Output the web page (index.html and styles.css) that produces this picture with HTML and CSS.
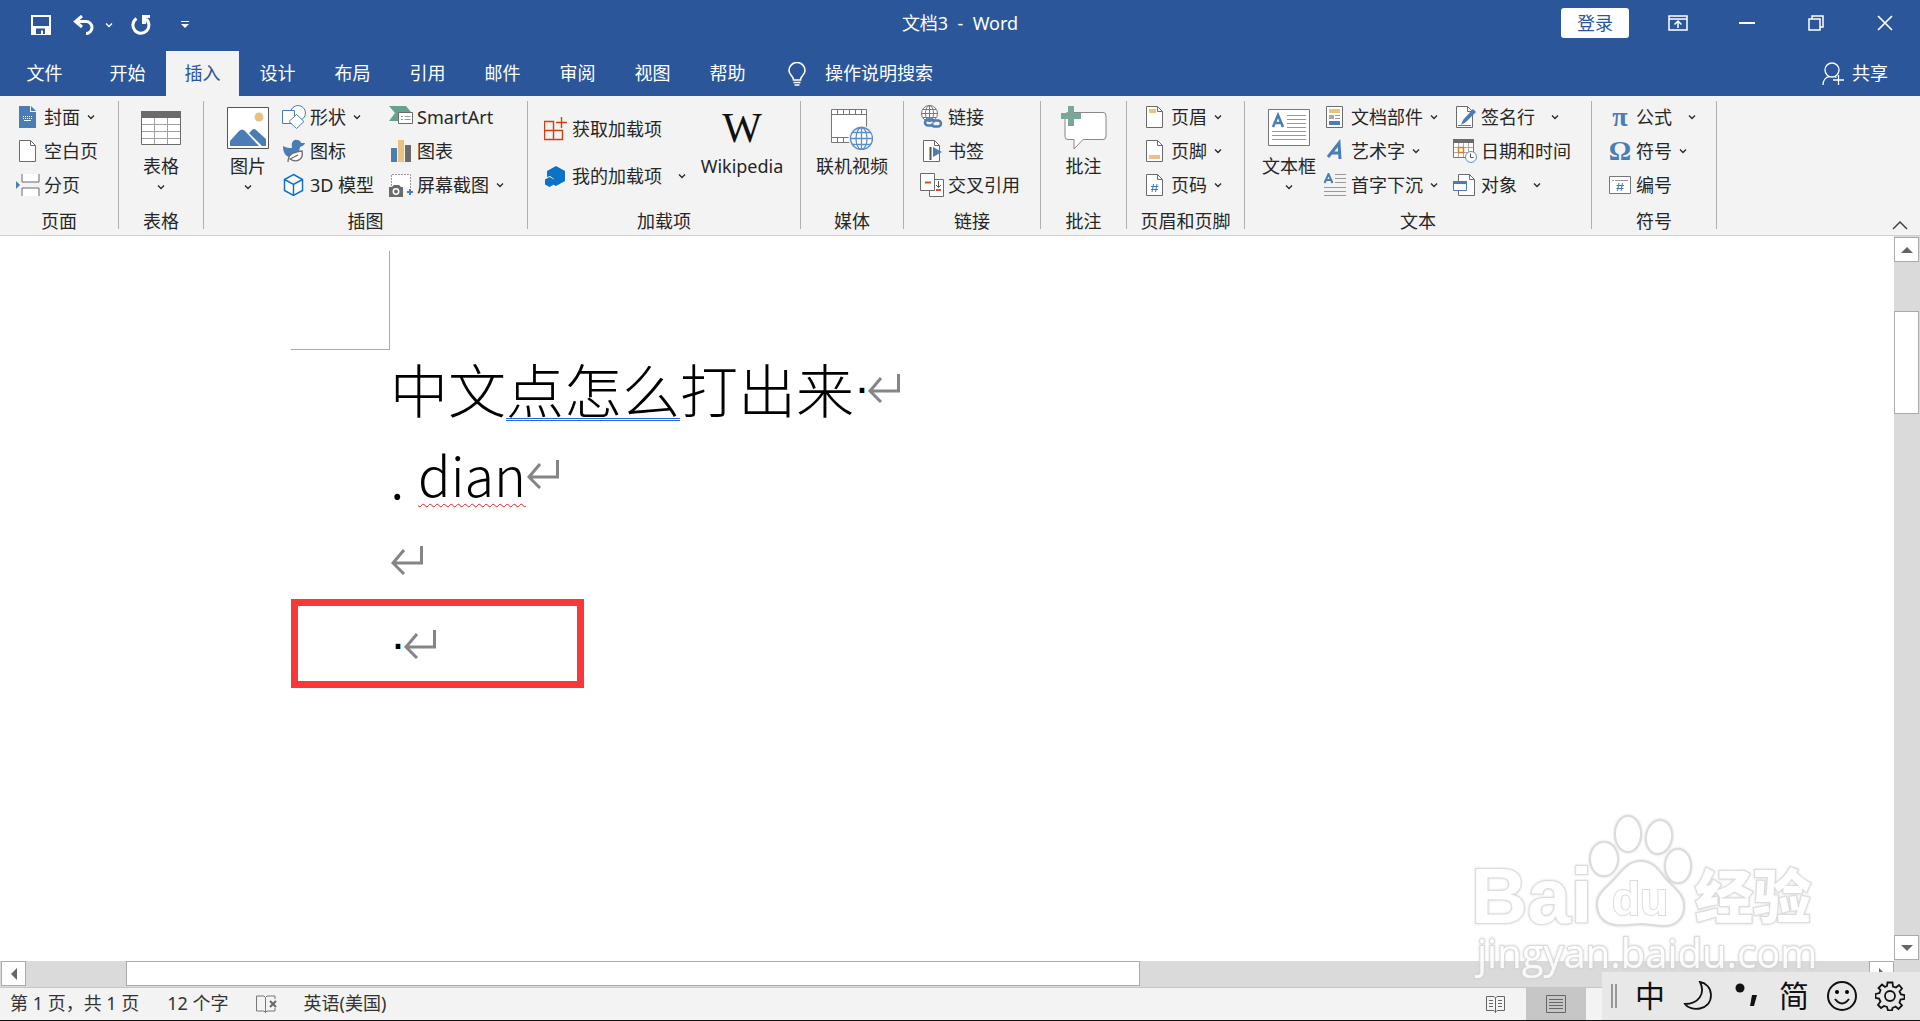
FILE: index.html
```html
<!DOCTYPE html>
<html lang="zh-CN">
<head>
  <meta charset="UTF-8" />
  <meta name="viewport" content="width=device-width, initial-scale=1.0" />
  <title>文档3 - Word</title>
  <link rel="stylesheet" href="styles.css">
</head>
<body>
  <svg class="defs" aria-hidden="true">
    <symbol id="chev" viewBox="0 0 8 6"><path d="M1 1.5l3 3 3-3" fill="none" stroke="currentColor" stroke-width="1.3"/></symbol>
    <symbol id="page" viewBox="0 0 24 24"><path d="M3.500 1.500h11l5 5v16h-16z" fill="#fff" stroke="#6b6b6b"/><path d="M14.500 1.500v5h5" fill="none" stroke="#6b6b6b"/></symbol>
    <symbol id="enter" viewBox="0 0 34 30"><path d="M31.500 1v17H3M14 5L3 18l11 11" fill="none" stroke="#858585" stroke-width="3"/></symbol>
  </svg>

  <!-- 标题栏 -->
  <header class="titlebar">
    <div class="quick">
      <button type="button" class="q-save" aria-label="保存"><svg width="20" height="20"><path d="M1 1h18v18H1z" fill="none" stroke="#fff" stroke-width="2"/><path d="M2 11h16v7H2z" fill="#fff"/><path d="M5 13.500h9V19H12v-3.500h-2V19H5z" fill="#2b579a"/></svg></button>
      <button type="button" class="q-undo" aria-label="撤消"><svg width="22" height="20"><path d="M9 1L2.500 6.500 9 12M3 6.500h10a6 6 0 0 1 0 12" fill="none" stroke="#fff" stroke-width="3"/></svg></button>
      <button type="button" class="q-chev" aria-label="撤消列表"><svg width="8" height="6"><use href="#chev"/></svg></button>
      <button type="button" class="q-redo" aria-label="重复"><svg width="20" height="20"><path d="M5.500 3.500A8 8 0 1 0 15 4" fill="none" stroke="#fff" stroke-width="3"/><path d="M11 0h8v3h-4v6h-4z" fill="#fff"/></svg></button>
      <button type="button" class="q-more" aria-label="自定义"><svg width="8" height="8"><path d="M0 .5h8" stroke="#fff"/><path d="M0 3h8L4 7z" fill="#fff"/></svg></button>
    </div>
    <h1>文档3&nbsp; -&nbsp; Word</h1>
    <div class="window-btns">
      <button type="button" class="login">登录</button>
      <button type="button" class="win" aria-label="功能区显示选项"><svg width="20" height="16"><path d="M1 1h18v14H1zM1 4h18M10 13V6M6.500 9.500L10 6l3.500 3.500" fill="none" stroke="#fff" stroke-width="1.500"/></svg></button>
      <button type="button" class="win" aria-label="最小化"><svg width="16" height="16"><path d="M0 8h16" stroke="#fff" stroke-width="2"/></svg></button>
      <button type="button" class="win" aria-label="还原"><svg width="16" height="16"><path d="M1 4h11v11H1zM4 4V1h11v11h-3" fill="none" stroke="#fff" stroke-width="1.500"/></svg></button>
      <button type="button" class="win" aria-label="关闭"><svg width="16" height="16"><path d="M1 1l14 14M15 1L1 15" stroke="#fff" stroke-width="1.700"/></svg></button>
    </div>
  </header>

  <!-- 选项卡 -->
  <nav class="tabs">
    <button type="button" class="file">文件</button>
    <button type="button">开始</button>
    <button type="button" class="active">插入</button>
    <button type="button">设计</button>
    <button type="button">布局</button>
    <button type="button">引用</button>
    <button type="button">邮件</button>
    <button type="button">审阅</button>
    <button type="button">视图</button>
    <button type="button">帮助</button>
    <button type="button" class="tell"><svg width="18" height="24"><path d="M5.500 18c0-4-4.500-5-4.500-9.500a8 8 0 0 1 16 0c0 4.500-4.500 5.500-4.500 9.500zM5.500 20.500h7M6.500 23h5" fill="none" stroke="#fff" stroke-width="1.600"/></svg>操作说明搜索</button>
    <button type="button" class="share"><svg width="22" height="24"><circle cx="10" cy="8" r="7" fill="none" stroke="#fff" stroke-width="1.300"/><path d="M1 23c0-5 3-8 6.500-8.500M12.500 14.500l2 1M16.500 13v10M11 18h11" fill="none" stroke="#fff" stroke-width="1.300"/></svg>共享</button>
  </nav>

  <!-- 功能区 -->
  <div class="ribbon">
    <section class="group g-page">
      <div class="body">
        <div class="col">
          <button type="button"><svg class="ic"><path d="M3 1h11v6h6v16H3z" fill="#4a7db5"/><path d="M15 1l5 5h-5z" fill="#4a7db5"/><path d="M7 11.500h9M7 13.500h9" stroke="#fff" stroke-dasharray="1 1"/><path d="M8 15.500h7" stroke="#fff"/></svg>封面<svg class="chev"><use href="#chev"/></svg></button>
          <button type="button"><svg class="ic"><use href="#page"/></svg>空白页</button>
          <button type="button"><svg class="ic"><path d="M6 1v8h17V1M6 23v-8h17v8" fill="#fff" stroke="#6b6b6b"/><path d="M0 8l4 4-4 4z" fill="#4a7db5"/></svg>分页</button>
        </div>
      </div>
      <h2>页面</h2>
    </section>

    <section class="group g-table">
      <div class="body">
        <button type="button" class="big"><svg width="42" height="44"><path d="M1.500 5.500h39v33h-39z" fill="#fff" stroke="#6b6b6b"/><path d="M1 5h40v7H1z" fill="#6b6b6b"/><path d="M2 18.500h38M2 25.500h38M2 32.500h38M14.500 12v26M27.500 12v26" stroke="#a0a0a0"/></svg>表格<svg class="chev"><use href="#chev"/></svg></button>
      </div>
      <h2>表格</h2>
    </section>

    <section class="group g-pics">
      <div class="body">
        <button type="button" class="big"><svg width="42" height="44"><path d="M.5 1.500h41v41H.5z" fill="#fff" stroke="#555"/><circle cx="32" cy="11" r="4.500" fill="#e9c282"/><path d="M3 40v-5l9-10q3-3 6 0l14 15z" fill="#4a7db5"/><path d="M22 27l3-3q2-2 4 0l10 9v7h-4z" fill="#4a7db5"/></svg>图片<svg class="chev"><use href="#chev"/></svg></button>
        <div class="col illus">
          <button type="button"><svg class="ic"><circle cx="16" cy="8" r="7.500" fill="#fff" stroke="#4a7db5"/><path d="M.5 5.500h12v13H.5z" fill="#fff" stroke="#4a7db5"/><path d="M14.500 9.500l7.500 7-7.500 7-7.500-7z" fill="#fff" stroke="#4a7db5"/></svg>形状<svg class="chev"><use href="#chev"/></svg></button>
          <button type="button"><svg class="ic"><path d="M1 7c4 2 6 2 9 2-1-5 1-9 5-8 3 0 4 2 4 3h4c-1 3-3 3-5 4-1 6-4 10-10 10C4 18 1 14 1 7z" fill="#4a7db5"/><path d="M6 23c0-7 4-10 14-11 2 9-6 12-12 8l8-4" fill="#fff" stroke="#6b6b6b" stroke-width="1.300"/></svg>图标</button>
          <button type="button"><svg class="ic"><path d="M11.500 1.500l9 5v11l-9 5-9-5v-11zM2.500 6.500l9 5 9-5M11.500 11.500v11" fill="#fff" stroke="#0f72c6" stroke-width="1.500"/></svg>3D 模型</button>
        </div>
        <div class="col">
          <button type="button"><svg class="ic"><path d="M0 1h17l5 6h-9v9H0l6-8z" fill="#62a48e"/><path d="M9.500 7.500h14v11h-14z" fill="#fff" stroke="#6b6b6b"/><path d="M12 11.500h2M12 14.500h2M15.500 11.500h6M15.500 14.500h6" stroke="#999"/></svg>SmartArt</button>
          <button type="button"><svg class="ic"><path d="M2 9h6v14H2z" fill="#4a7db5"/><path d="M9 1h6v22H9z" fill="#e9c282"/><path d="M16 6h6v17h-6z" fill="#6b6b6b"/></svg>图表</button>
          <button type="button"><svg class="ic"><path d="M2.500 13V1.500h19V16" fill="#fff" stroke="#999" stroke-dasharray="2 1"/><path d="M0 14h3l2-2h5l2 2h2v10H0z" fill="#6b6b6b"/><circle cx="7" cy="18.500" r="2.700" fill="none" stroke="#fff" stroke-width="1.500"/><path d="M21 16v6M18 19h6" stroke="#4a7db5" stroke-width="2"/></svg>屏幕截图<svg class="chev"><use href="#chev"/></svg></button>
        </div>
      </div>
      <h2>插图</h2>
    </section>

    <section class="group g-addin">
      <div class="body">
        <div class="col spaced">
          <button type="button"><svg class="ic"><path d="M.5 4.500h9v18h-9zM.5 13.500h18v9H.5zM9.500 4.500V13M17.500 0v11M12 5.500h11" fill="none" stroke="#d0400e" stroke-width="1.400"/></svg>获取加载项</button>
          <button type="button"><svg class="ic"><path d="M12 2l9 5v10l-9 5-2-1v-6l-4-3-3 1V7z" fill="#0b72c8"/><path d="M5.500 13l4.500 2.500v5L5.500 23 1 20.500v-5z" fill="#0b72c8"/></svg>我的加载项<svg class="chev far"><use href="#chev"/></svg></button>
        </div>
        <button type="button" class="big wiki"><span class="w">W</span>Wikipedia</button>
      </div>
      <h2>加载项</h2>
    </section>

    <section class="group g-media">
      <div class="body">
        <button type="button" class="big"><svg width="42" height="44"><path d="M.5 3.500h35v33H.5z" fill="#fff" stroke="#777"/><path d="M.5 8.500h35M.5 31.500h35M6.500 4v4.500M12.500 4v4.500M18.500 4v4.500M24.500 4v4.500M30.500 4v4.500M6.500 32v4.500M12.500 32v4.500M18.500 32v4.500" stroke="#777" fill="none"/><circle cx="30.500" cy="32.500" r="13" fill="#f3f3f3"/><circle cx="30.500" cy="32.500" r="11" fill="#fff" stroke="#5c8fca" stroke-width="1.300"/><ellipse cx="30.500" cy="32.500" rx="5.500" ry="11" fill="none" stroke="#5c8fca" stroke-width="1.300"/><path d="M30.500 21.500v22M19.500 32.500h22M21.500 26.500h18M21.500 38.500h18" stroke="#5c8fca" stroke-width="1.300"/></svg>联机视频</button>
      </div>
      <h2>媒体</h2>
    </section>

    <section class="group g-link">
      <div class="body">
        <div class="col">
          <button type="button"><svg class="ic"><circle cx="9.500" cy="8.500" r="8" fill="#fff" stroke="#777"/><ellipse cx="9.500" cy="8.500" rx="4" ry="8" fill="none" stroke="#777"/><path d="M9.500 0v17M1 8.500h17M3 4.500h13M3 12.500h13" stroke="#777"/><path d="M13 20.500H8a3 3 0 0 1 0-6h4q3 1 1 3M13 15.500h5a3 3 0 0 1 0 6h-4q-3-1-1-3" fill="none" stroke="#4a7db5" stroke-width="2.500"/></svg>链接</button>
          <button type="button"><svg class="ic"><use href="#page"/><path d="M10.500 8v13" stroke="#555" stroke-width="2"/><path d="M13 8l9 5-9 5z" fill="#4a7db5"/></svg>书签</button>
          <button type="button"><svg class="ic"><path d="M9.500 6.500h14v17h-14z" fill="#fff" stroke="#6b6b6b"/><path d="M.5.5h14v17H.5z" fill="#fff" stroke="#6b6b6b"/><path d="M5 9.500h6M16 17h5" stroke="#d8502c" stroke-width="2"/><path d="M18.500 8v6M16 12l2.500 2.500L21 12" fill="none" stroke="#555"/></svg>交叉引用</button>
        </div>
      </div>
      <h2>链接</h2>
    </section>

    <section class="group g-note">
      <div class="body">
        <button type="button" class="big"><svg width="46" height="44"><path d="M7 6.500h35q3 0 3 3v21q0 3-3 3H22L13 43v-9.500H7q-3 0-3-3v-21q0-3 3-3z" fill="#fff" stroke="#888"/><path d="M7 0h6v7h7v6h-7v7H7v-7H0V7h7z" fill="#79a898"/></svg>批注</button>
      </div>
      <h2>批注</h2>
    </section>

    <section class="group g-head">
      <div class="body">
        <div class="col">
          <button type="button"><svg class="ic"><use href="#page"/><path d="M6 4h7v4H6z" fill="#e9c282"/></svg>页眉<svg class="chev"><use href="#chev"/></svg></button>
          <button type="button"><svg class="ic"><use href="#page"/><path d="M6 16h11v4H6z" fill="#e9c282"/></svg>页脚<svg class="chev"><use href="#chev"/></svg></button>
          <button type="button"><svg class="ic"><use href="#page"/><path d="M10.500 11l-1.500 8M14 11l-1.500 8M8 13.500h7.500M8 16.500h7" stroke="#3e79bb" fill="none"/></svg>页码<svg class="chev"><use href="#chev"/></svg></button>
        </div>
      </div>
      <h2>页眉和页脚</h2>
    </section>

    <section class="group g-text">
      <div class="body">
        <button type="button" class="big"><svg width="42" height="44"><path d="M.5 3.500h41v36H.5z" fill="#fff" stroke="#777"/><path d="M5 21l5-12 5 12M7 17h6" fill="none" stroke="#4a7db5" stroke-width="2.500"/><path d="M19 9.500h19M19 13.500h19M19 17.500h19M19 21.500h19M4 25.500h34M4 29.500h34M4 33.500h34" stroke="#999"/></svg>文本框<svg class="chev"><use href="#chev"/></svg></button>
        <div class="col parts">
          <button type="button"><svg class="ic"><path d="M3.500 1.500h16v21h-16z" fill="#fff" stroke="#6b6b6b"/><path d="M6 4h11v4H6z" fill="#e9c282"/><path d="M6 10h5v4H6z" fill="#aaa"/><path d="M12 10.500h5M12 13.500h5" stroke="#999"/><path d="M6 16h11v4H6z" fill="#4a7db5"/></svg>文档部件<svg class="chev"><use href="#chev"/></svg></button>
          <button type="button"><svg class="ic"><path d="M5 18L16 4l1 16M8 14h8" fill="none" stroke="#4a7db5" stroke-width="3"/></svg>艺术字<svg class="chev"><use href="#chev"/></svg></button>
          <button type="button"><svg class="ic"><path d="M1.500 10l4-9 4 9M3 7h5" fill="none" stroke="#4a7db5" stroke-width="2"/><path d="M12 1.500h11M12 5.500h11M12 9.500h11M1 14.500h22M1 18.500h22M1 22.500h22" stroke="#999"/></svg>首字下沉<svg class="chev"><use href="#chev"/></svg></button>
        </div>
        <div class="col">
          <button type="button"><svg class="ic"><use href="#page"/><path d="M5 20.500h13" stroke="#4a7db5"/><path d="M8 20l2-5L20 4l3 3-10 10z" fill="#4a7db5"/></svg>签名行<svg class="chev far"><use href="#chev"/></svg></button>
          <button type="button"><svg class="ic"><path d="M.5.5h20v18H.5z" fill="#fff" stroke="#777"/><path d="M0 0h21v4H0z" fill="#6b6b6b"/><path d="M1 8.500h19M1 13.500h19M5.500 4v14M10.500 4v14M15.500 4v14" stroke="#aaa"/><path d="M5.500 8.500h5v5h-5z" fill="#fff" stroke="#e07a20" stroke-width="1.500"/><circle cx="18" cy="18" r="5.500" fill="#fff" stroke="#5c8fca"/><path d="M17.500 14.500v4h3" fill="none" stroke="#555"/></svg>日期和时间</button>
          <button type="button"><svg class="ic"><path d="M5.500 1.500h11l5 5v16h-16z" fill="#fff" stroke="#6b6b6b"/><path d="M16.500 1.500v5h5" fill="none" stroke="#6b6b6b"/><path d="M.5 8.500h13v9H.5z" fill="#fff" stroke="#4a7db5"/><path d="M0 8h14v3H0z" fill="#4a7db5"/></svg>对象<svg class="chev far"><use href="#chev"/></svg></button>
        </div>
      </div>
      <h2>文本</h2>
    </section>

    <section class="group g-symbol">
      <div class="body">
        <div class="col">
          <button type="button"><span class="ic greek">π</span>公式<svg class="chev far"><use href="#chev"/></svg></button>
          <button type="button"><span class="ic greek">Ω</span>符号<svg class="chev"><use href="#chev"/></svg></button>
          <button type="button"><svg class="ic"><path d="M1.500 3.500h21v17h-21z" fill="#fff" stroke="#777"/><path d="M4 7.500h2M7 7.500h13" stroke="#999"/><path d="M11 10l-1.500 8M14.500 10L13 18M8.500 12.500H16M8.500 15.500h7" stroke="#3e79bb" fill="none"/></svg>编号</button>
        </div>
      </div>
      <h2>符号</h2>
    </section>

    <button type="button" class="collapse" aria-label="折叠功能区"><svg width="16" height="9"><path d="M1 8l7-7 7 7" fill="none" stroke="#444" stroke-width="1.500"/></svg></button>
  </div>

  <!-- 文档区 -->
  <div class="workspace">
    <main class="doc">
      <div class="corner"></div>
      <p>中文<span class="grammar">点怎么</span>打出来<span class="dot">·</span><svg class="enter"><use href="#enter"/></svg></p>
      <p><span class="stop">.</span><span class="spell">dian</span><svg class="enter"><use href="#enter"/></svg></p>
      <p><svg class="enter"><use href="#enter"/></svg></p>
      <p class="marked"><span class="dot">·</span><svg class="enter"><use href="#enter"/></svg></p>
    </main>
    <div class="vscroll">
      <button type="button" aria-label="向上"><svg width="12" height="6"><path d="M0 6l6-6 6 6z" fill="#666"/></svg></button>
      <div class="thumb"></div>
      <button type="button" class="last" aria-label="向下"><svg width="12" height="6"><path d="M0 0h12L6 6z" fill="#666"/></svg></button>
    </div>
  </div>
  <div class="hscroll">
    <button type="button" aria-label="向左"><svg width="6" height="12"><path d="M6 0v12L0 6z" fill="#666"/></svg></button>
    <div class="track"><div class="thumb"></div></div>
    <button type="button" aria-label="向右"><svg width="6" height="12"><path d="M0 0v12l6-6z" fill="#666"/></svg></button>
  </div>

  <!-- 状态栏 -->
  <footer class="status">
    <span class="pages">第 1 页，共 1 页</span>
    <span class="words">12 个字</span>
    <svg class="proof" width="22" height="18"><path d="M9.500 2.500L8 1H.5v15H8l1.500 1.500L11 16h8v-3M9.500 2.500v15M9.500 2.500L11 1h8v3" fill="none" stroke="#777"/><path d="M14 6l6 6M20 6l-6 6" stroke="#666" stroke-width="2"/></svg>
    <span>英语(美国)</span>
    <button type="button" class="view read" aria-label="阅读视图"><svg width="20" height="18"><path d="M9.500 3L8 1.500H.5v14H8l1.500 1.500 1.500-1.500h7.500v-14H11L9.500 3v15M3 5.500h4M3 8.500h4M3 11.500h4M12 5.500h4M12 8.500h4M12 11.500h4" fill="none" stroke="#666"/></svg></button>
    <button type="button" class="view on" aria-label="页面视图"><svg width="20" height="18"><path d="M.5.5h19v17H.5zM3 4.500h14M3 7.500h14M3 10.500h14M3 13.500h14" fill="none" stroke="#666"/></svg></button>
  </footer>

  <!-- 水印 -->
  <svg class="watermark" width="350" height="175">
    <g fill="#fff" stroke="#d6d6d6" stroke-width="2">
      <ellipse cx="157" cy="22" rx="13" ry="18"/>
      <ellipse cx="188" cy="25" rx="13" ry="17" transform="rotate(10 188 25)"/>
      <ellipse cx="133" cy="47" rx="14" ry="17"/>
      <ellipse cx="207" cy="54" rx="13" ry="17"/>
      <path d="M170 49c12 0 18 9 24 17 9 10 19 16 19 28 0 14-10 20-20 20-9 0-14-2-23-2s-16 2-25 1c-11-1-19-8-19-21 0-12 11-17 20-28 7-8 13-15 24-15z"/>
      <text class="wm-bai" x="0" y="111">Bai</text>
      <text class="wm-du" x="141" y="103">du</text>
      <text class="wm-cn" x="224" y="106">经验</text>
      <text class="wm-url" x="6" y="156">jingyan.baidu.com</text>
    </g>
  </svg>

  <!-- 输入法工具条 -->
  <div class="ime">
    <i class="grip"></i>
    <button type="button">中</button>
    <button type="button" aria-label="全半角"><svg width="30" height="30"><path d="M17 1c6 12-2 22-15 22 5 8 26 7 26-9 0-7-5-12-11-13z" fill="none" stroke="#111" stroke-width="1.800"/></svg></button>
    <button type="button" aria-label="标点"><svg width="24" height="26"><circle cx="6" cy="5" r="4.500" fill="#111"/><path d="M18 12h5l-3 11h-4z" fill="#111"/></svg></button>
    <button type="button">简</button>
    <button type="button" aria-label="表情"><svg width="30" height="30"><circle cx="15" cy="15" r="14" fill="none" stroke="#111" stroke-width="2"/><circle cx="10" cy="11" r="2"/><circle cx="20" cy="11" r="2"/><path d="M8 18q7 9 14 0" fill="none" stroke="#111" stroke-width="2"/></svg></button>
    <button type="button" aria-label="设置"><svg width="30" height="30"><path d="M12.500 1.500h5l.5 4 3 1 3-2.500 3 3.500-2.500 3 1.500 3 3.500.5v4l-4 .5-1 3 2.500 3-3.500 3.500-3-2.500-3 1.500-.5 2.500h-4l-1-3.500-3-1-3 2-3-3 2.500-3.500-1.500-3-3.500-.5v-4l4-1 1-3L3.500 7 7 3.500 10 6l2-1z" fill="none" stroke="#111" stroke-width="1.800"/><circle cx="15" cy="15" r="5" fill="none" stroke="#111" stroke-width="1.800"/></svg></button>
  </div>
</body>
</html>
```
FILE: styles.css
```css
* { box-sizing: border-box; }
body {
  margin: 0;
  height: 100vh;
  display: flex; flex-direction: column;
  overflow: hidden;
  position: relative;
  background: #fff;
  color: #262626;
  font-family: "Noto Sans", "Noto Sans CJK SC", sans-serif;
  font-size: 18px;
}
button {
  font: inherit; color: inherit;
  padding: 0; border: none; background: none;
  white-space: nowrap;
}
svg { display: block; flex: none; }
h1, h2, p { margin: 0; font-weight: normal; }
.defs { position: absolute; width: 0; height: 0; }

/* 标题栏 */
.titlebar {
  display: grid; grid-template-columns: 1fr auto 1fr;
  align-items: center;
  flex: none; height: 51px;
  background: #2b579a; color: #fff;
}
.titlebar h1 { font-size: 18px; line-height: 46px; height: 51px; }
.quick { display: flex; align-items: center; padding-left: 31px; height: 49px; align-self: start; }
.q-undo { margin-left: 22px; }
.q-chev { margin-left: 10px; }
.q-redo { margin-left: 18px; }
.q-more { margin-left: 30px; }
.window-btns { display: flex; align-items: center; justify-content: flex-end; height: 46px; padding-right: 1px; align-self: start; }
.login {
  width: 68px; height: 30px; line-height: 30px;
  margin-right: 14px;
  background: #fff; color: #2b579a;
  border-radius: 3px;
}
.win { width: 69px; height: 46px; display: flex; align-items: center; justify-content: center; }

/* 选项卡 */
.tabs {
  display: flex; gap: 2px;
  flex: none; height: 45px;
  background: #2b579a; color: #fff;
}
.tabs button { width: 73px; line-height: 45px; }
.tabs .file { width: 89px; }
.tabs .active { background: #f3f3f3; color: #2b579a; }
.tabs .tell { width: auto; display: flex; align-items: center; gap: 19px; margin-left: 22px; }
.tabs .share { width: auto; display: flex; align-items: center; gap: 8px; margin-left: auto; margin-right: 32px; }

/* 功能区 */
.ribbon {
  display: flex;
  flex: none; height: 140px;
  padding: 5px 0;
  background: #f3f3f3;
  border-bottom: 1px solid #d0d0d0;
}
.group {
  display: flex; flex-direction: column;
  flex: none; height: 128px;
  border-right: 1px solid #b0b0b0;
}
.group h2 { font-size: 18px; line-height: 36px; height: 26px; text-align: center; }
.body { display: flex; height: 102px; padding-left: 16px; }
.g-page { width: 119px; }
.g-table { width: 85px; }
.g-pics { width: 324px; }
.g-addin { width: 273px; }
.g-media { width: 103px; }
.g-link { width: 137px; }
.g-note { width: 86px; }
.g-head { width: 118px; }
.g-text { width: 347px; }
.g-symbol { width: 125px; }
.g-table .body, .g-media .body, .g-note .body { padding-left: 0; justify-content: center; }
.g-pics .body, .g-text .body { padding-left: 10px; }

.col button { display: flex; align-items: center; height: 34px; line-height: 32px; padding-bottom: 3px; }
.ic { width: 24px; height: 24px; margin-right: 4px; }
.illus { width: 107px; }
.parts { width: 130px; }
.spaced { width: 148px; padding-top: 12px; }
.spaced button + button { margin-top: 13px; }
.chev { width: 8px; height: 6px; margin-left: 7px; }
.chev.far { margin-left: 16px; }
.big {
  display: flex; flex-direction: column; align-items: center;
  min-width: 68px; height: 102px;
  padding-top: 5px;
  line-height: 32px;
}
.big .chev { margin: 2px 0 0; }
.wiki { width: 100px; }
.w {
  height: 44px; line-height: 44px;
  font-family: "Liberation Serif", serif;
  font-size: 42px; color: #111;
}
.greek {
  line-height: 24px; text-align: center;
  font-family: "Liberation Serif", serif;
  font-weight: bold; font-size: 28px; color: #4a7db5;
}
.collapse { align-self: flex-end; margin-left: auto; margin-right: 12px; }

/* 文档区 */
.workspace { display: flex; flex: 1; min-height: 0; }
.doc { flex: 1; padding: 15px 0 0 291px; }
.corner {
  width: 99px; height: 99px;
  margin-bottom: -5px;
  border-right: 1px solid #aaa;
  border-bottom: 1px solid #aaa;
}
.doc p {
  display: flex; align-items: center;
  height: 86px; padding-left: 99px;
  font-family: "Noto Sans CJK SC", sans-serif;
  font-weight: 300; font-size: 58px; line-height: 86px;
  color: #000;
}
.grammar {
  text-decoration: underline double #2b66d9 1px;
  text-underline-offset: 5px;
  text-decoration-skip-ink: none;
}
.spell {
  font-size: 54px;
  text-decoration: underline wavy #e8202a 1px;
  text-underline-offset: 6px;
  text-decoration-skip-ink: none;
}
.stop { width: 28px; }
.dot { width: 13px; font-family: "Liberation Sans", sans-serif; font-size: 48px; }
.enter { width: 34px; height: 30px; }
.doc .marked {
  width: 293px; height: 89px; line-height: 75px;
  margin-top: -4px; padding-left: 92px;
  border: 7px solid #fb3838;
}

.vscroll {
  display: flex; flex-direction: column;
  width: 26px; padding: 1px 1px 0 0;
  background: #dadada;
}
.vscroll button, .hscroll button {
  display: flex; align-items: center; justify-content: center;
  flex: none; width: 25px; height: 25px;
  background: #fff; border: 1px solid #ababab;
}
.vscroll .thumb { width: 25px; height: 103px; margin-top: 49px; background: #fff; border: 1px solid #ababab; }
.vscroll .last { margin-top: auto; margin-bottom: 1px; }
.hscroll {
  display: flex;
  flex: none; height: 26px;
  padding: 0 26px 0 1px;
  background: #dadada;
}
.track { flex: 1; padding-left: 100px; }
.hscroll .thumb { width: 58.2%; height: 25px; background: #fff; border: 1px solid #ababab; }

/* 状态栏 */
.status {
  display: flex; align-items: center;
  flex: none; height: 34px;
  padding-left: 10px;
  background: #f3f3f3;
  border-top: 1px solid #c6c6c6;
  border-bottom: 1px solid #111;
  font-size: 18px; line-height: 28px; color: #333;
}
.status span { padding-bottom: 3px; }
.words { margin-left: 28px; }
.proof { margin: 0 26px 0 27px; }
.view { display: flex; align-items: center; justify-content: center; width: 60px; height: 32px; }
.read { margin-left: auto; }
.view.on { background: #c6c6c6; margin-right: 334px; }

/* 水印 */
.watermark {
  position: absolute; right: 99px; bottom: 34px;
  filter: drop-shadow(0 0 1px #ccc);
  opacity: 0.85;
}
.watermark text { paint-order: stroke; }
.wm-bai { font: bold 78px "Liberation Sans", sans-serif; }
.wm-du { font: bold 46px "Liberation Sans", sans-serif; }
.wm-cn { font: 900 58px "Noto Sans CJK SC", sans-serif; }
.wm-url { font: 40px "Open Sans", sans-serif; }

/* 输入法 */
.ime {
  position: absolute; right: 0; bottom: 1px;
  display: flex; align-items: center;
  width: 318px; height: 48px;
  padding-left: 9px;
  background: #e8e8e8; color: #111;
}
.ime button {
  display: flex; align-items: center; justify-content: center;
  width: 48px; height: 48px;
  font-size: 30px; line-height: 48px;
}
.grip { width: 6px; height: 24px; margin-right: 9px; border: 2px solid #999; border-width: 0 2px; }
```
